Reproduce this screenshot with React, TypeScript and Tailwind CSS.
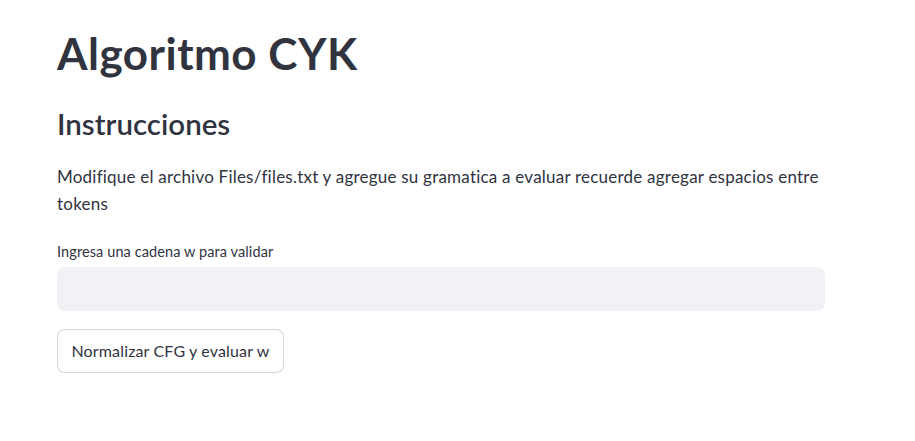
export default function App() {
  return (
    <div className="min-h-screen bg-white text-[#31333F] font-['Lato','Noto_Sans',sans-serif]">
      <div className="w-[768px] pl-[57px] box-content pt-[27px]">
        <h1 className="text-[44px] font-bold leading-[1.2] tracking-[0.5px]">
          Algoritmo CYK
        </h1>
        <h2 className="mt-[26px] text-[29.5px] font-semibold leading-[36px]">
          Instrucciones
        </h2>
        <p className="mt-[21px] text-[17px] leading-[27px] tracking-[0.22px]">
          Modifique el archivo Files/files.txt y agregue su gramatica a evaluar recuerde agregar
          espacios entre tokens
        </p>
        <label className="mt-[25px] block text-[14.5px] leading-[20px] tracking-[0.1px]">
          Ingresa una cadena w para validar
        </label>
        <input
          type="text"
          className="mt-[5px] block h-[44px] w-full rounded-lg bg-[#F0F2F6] px-3 outline-none"
        />
        <button className="mt-[18px] h-[44px] w-[227px] rounded-lg border border-[rgba(49,51,63,0.2)] bg-white text-[16px] tracking-[0.15px]">
          Normalizar CFG y evaluar w
        </button>
      </div>
    </div>
  );
}
